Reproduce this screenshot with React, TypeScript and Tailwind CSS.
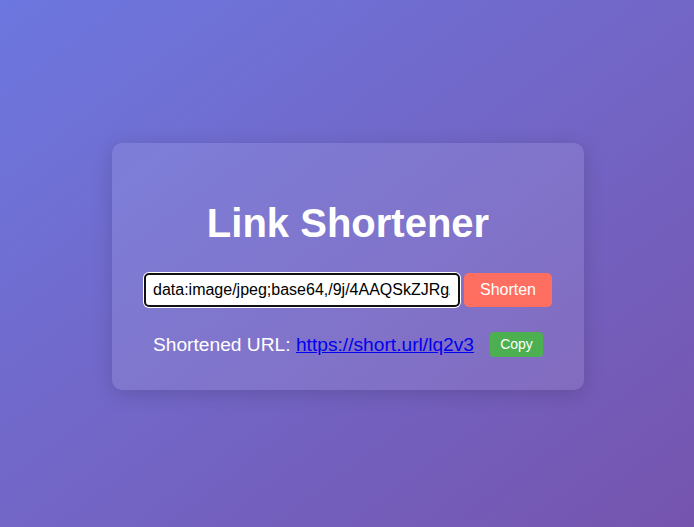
import { useState } from 'react';

function App() {
  const [url, setUrl] = useState('data:image/jpeg;base64,/9j/4AAQSkZJRgABAQAAAQABAAD');
  const shortUrl = 'https://short.url/lq2v3';

  return (
    <div className="min-h-screen w-full flex items-center justify-center pt-[6px] bg-gradient-to-br from-[#6c77df] to-[#7554ae] font-['Liberation_Sans',Arial,sans-serif]">
      <div className="w-[472px] ml-[2px] rounded-[10px] bg-white/10 px-[30px] pt-[30px] pb-[33px] shadow-[0_4px_20px_rgba(0,0,0,0.15)] text-center">
        <h1 className="my-[27px] text-[40px] leading-[46px] font-bold text-white">Link Shortener</h1>

        <div className="flex items-center justify-center">
          <input
            value={url}
            onChange={(e) => setUrl(e.target.value)}
            className="w-[316px] h-[34px] rounded-[5px] border-2 border-[#111] bg-white pl-[7px] pr-2 text-[16px] text-black outline-none shadow-[0_0_0_1px_#fff]"
          />
          <button className="ml-[4px] w-[88px] h-[34px] rounded-[5px] bg-[#ff6f61] text-[16px] text-white">
            Shorten
          </button>
        </div>

        <div className="mt-[25px] flex items-center justify-center">
          <span className="text-[19.2px] leading-[22px] text-white">
            Shortened URL:{' '}
            <a href="#" className="text-[#0000ee] underline">
              {shortUrl}
            </a>
          </span>
          <button className="ml-[16px] h-[25px] w-[53px] rounded-[4px] bg-[#4caf50] text-[14px] text-white">
            Copy
          </button>
        </div>
      </div>
    </div>
  );
}

export default App;
